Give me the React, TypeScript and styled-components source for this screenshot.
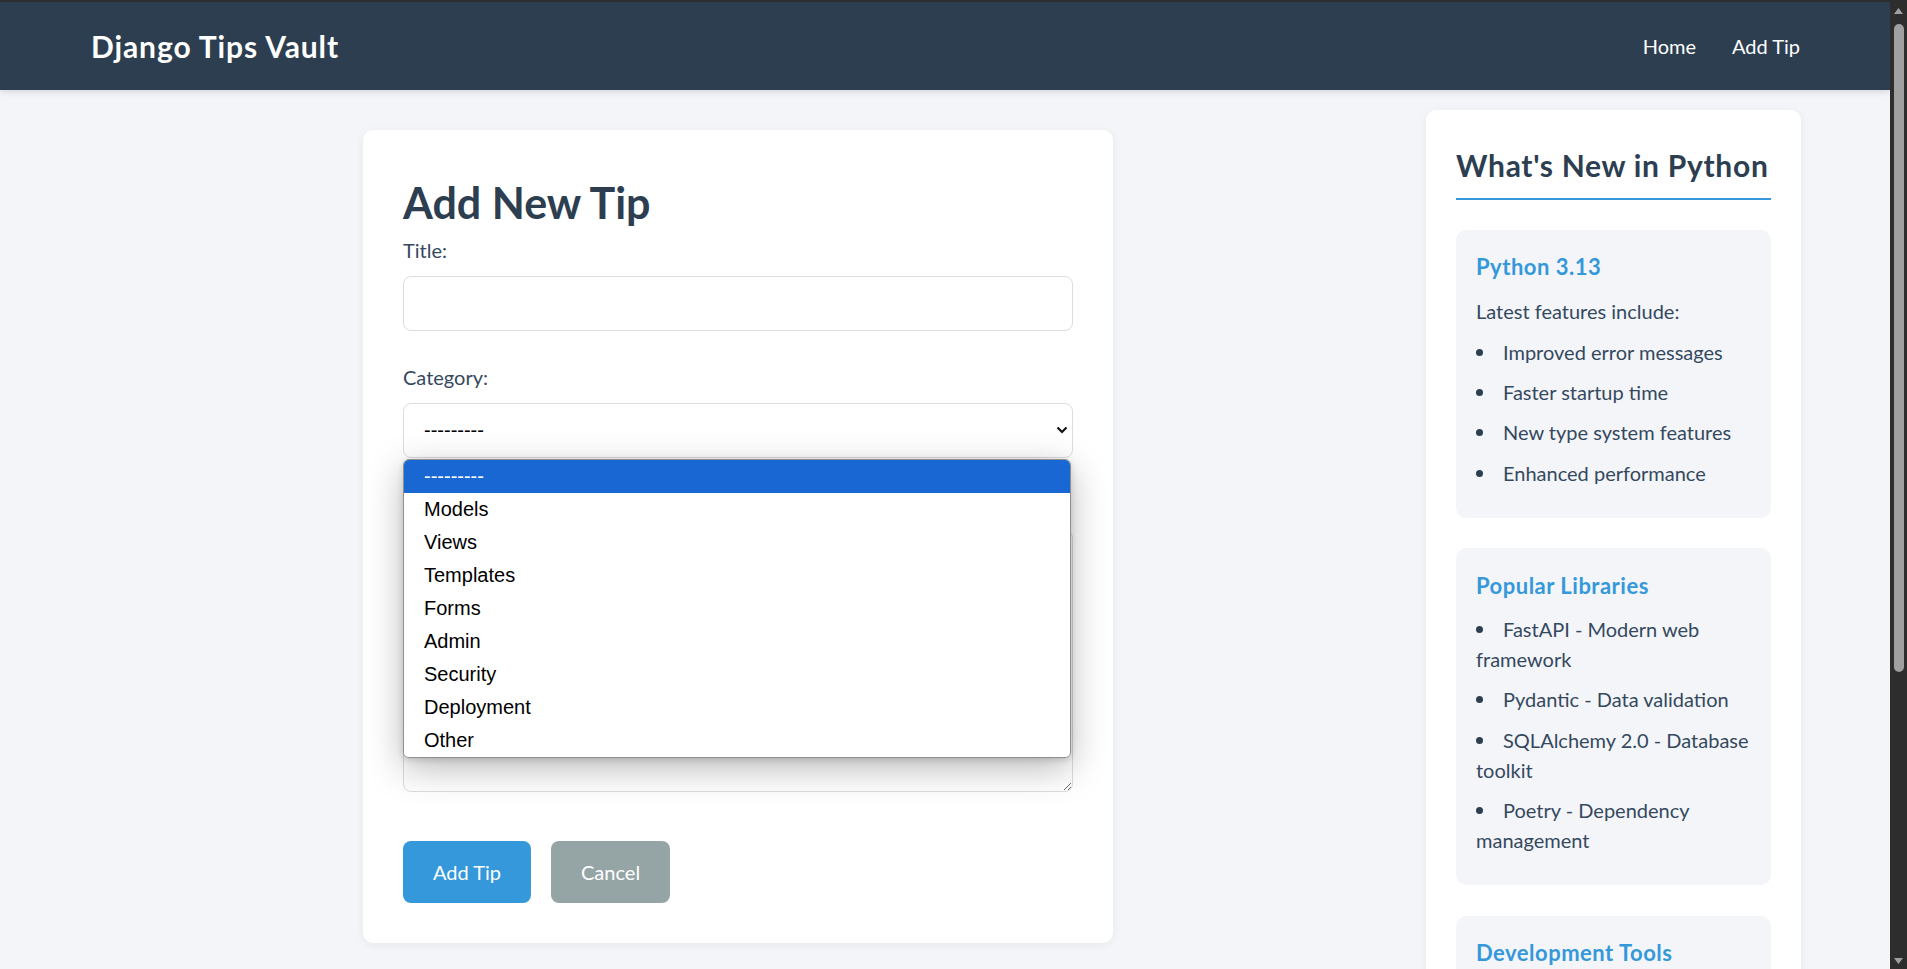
import React from "react";
import styled, { createGlobalStyle } from "styled-components";

const GlobalStyle = createGlobalStyle`
  html, body {
    margin: 0;
    padding: 0;
    height: 100%;
    overflow: hidden;
  }
  body {
    font-family: Lato, "Open Sans", sans-serif;
    background: #f4f5f9;
  }
  *, *::before, *::after {
    box-sizing: border-box;
  }
`;

const Frame = styled.div`
  display: flex;
  height: 100vh;
  border-top: 2px solid #2e2e2e;
  overflow: hidden;
`;

const Viewport = styled.div`
  flex: 1;
  min-width: 0;
  display: flex;
  flex-direction: column;
  overflow: hidden;
  background: #f4f5f9;
`;

const Header = styled.header`
  position: relative;
  z-index: 2;
  flex: none;
  height: 88px;
  display: flex;
  align-items: center;
  justify-content: space-between;
  padding: 0 90px 0 91px;
  background: #2c3e50;
  box-shadow: 0 2px 6px rgba(0, 0, 0, 0.12);
`;

const Brand = styled.a`
  font-size: 30px;
  line-height: 36px;
  font-weight: 700;
  letter-spacing: 0.9px;
  color: #ffffff;
  text-decoration: none;
`;

const Nav = styled.nav`
  display: flex;
  gap: 36px;
`;

const NavLink = styled.a`
  font-size: 20px;
  line-height: 24px;
  color: #ffffff;
  text-decoration: none;
`;

const Layout = styled.main`
  display: grid;
  grid-template-columns: 1fr 375px;
  gap: 40px;
  align-items: start;
  padding: 20px 89px 0 90px;
`;

const FormCard = styled.section`
  width: 100%;
  max-width: 750px;
  margin: 20px auto 0;
  background: #ffffff;
  border-radius: 10px;
  padding: 40px;
  box-shadow: 0 2px 10px rgba(0, 0, 0, 0.06);
`;

const PageTitle = styled.h1`
  margin: 6.6px 0 6.8px;
  font-size: 43px;
  line-height: 51.6px;
  font-weight: 700;
  color: #2c3e50;
`;

const FormGroup = styled.div`
  margin-bottom: 31px;
`;

const Label = styled.label`
  display: block;
  font-size: 20px;
  line-height: 30px;
  margin-bottom: 11px;
  color: #34495e;
`;

const TextInput = styled.input`
  display: block;
  width: 100%;
  height: 55px;
  padding: 0 20px;
  border: 1px solid #dddddd;
  border-radius: 8px;
  font-family: Lato, sans-serif;
  font-size: 20px;
  background: #ffffff;
`;

const SelectWrap = styled.div`
  position: relative;
`;

const Select = styled.select`
  display: block;
  width: 100%;
  height: 55px;
  padding: 0 40px 0 20px;
  border: 1px solid #dddddd;
  border-radius: 8px;
  appearance: none;
  -webkit-appearance: none;
  background: #ffffff;
  font-family: "Liberation Sans", Arial, sans-serif;
  font-size: 20px;
  color: #000000;
`;

const Chevron = styled.svg`
  position: absolute;
  right: 5px;
  top: 50%;
  transform: translateY(-50%);
  pointer-events: none;
`;

const Dropdown = styled.div`
  position: absolute;
  z-index: 5;
  top: calc(100% + 1px);
  left: 0;
  right: 2px;
  background: #ffffff;
  border: 1px solid #8f8f8f;
  border-radius: 6px;
  overflow: hidden;
  box-shadow: 0 10px 36px rgba(0, 0, 0, 0.28), 0 2px 6px rgba(0, 0, 0, 0.15);
`;

const OptionRow = styled.div<{ $selected?: boolean }>`
  height: 33px;
  display: flex;
  align-items: center;
  padding-left: 20px;
  font-family: "Liberation Sans", Arial, sans-serif;
  font-size: 20px;
  color: ${(p) => (p.$selected ? "#ffffff" : "#000000")};
  background: ${(p) => (p.$selected ? "#1967d2" : "#ffffff")};
`;

const TextArea = styled.textarea`
  display: block;
  width: 100%;
  height: 262px;
  padding: 14px 20px;
  border: 1px solid #dddddd;
  border-radius: 8px;
  font-family: Lato, sans-serif;
  font-size: 20px;
  resize: vertical;
  background: #ffffff;
`;

const Actions = styled.div`
  display: flex;
  gap: 20px;
  margin-top: 49px;
`;

const Button = styled.button<{ $bg: string }>`
  height: 62px;
  padding: 0 30px;
  border: none;
  border-radius: 8px;
  background: ${(p) => p.$bg};
  color: #ffffff;
  font-family: Lato, sans-serif;
  font-size: 20px;
  line-height: 24px;
  cursor: pointer;
`;

const Sidebar = styled.aside`
  background: #ffffff;
  border-radius: 10px;
  padding: 30px;
  box-shadow: 0 2px 10px rgba(0, 0, 0, 0.06);
`;

const SideTitle = styled.h2`
  margin: 7px 0 30px;
  padding-bottom: 15px;
  border-bottom: 2px solid #3498db;
  font-size: 30px;
  line-height: 36px;
  font-weight: 700;
  letter-spacing: 0.7px;
  white-space: nowrap;
  color: #2c3e50;
`;

const InfoCard = styled.div`
  background: #f4f5f9;
  border-radius: 10px;
  padding: 20px;
  margin-bottom: 30.5px;
`;

const InfoTitle = styled.h3`
  margin: 4.3px 0 15px;
  font-size: 22px;
  line-height: 26.4px;
  font-weight: 700;
  letter-spacing: 0.5px;
  color: #3498db;
`;

const InfoText = styled.p`
  margin: 0 0 11px;
  font-size: 20px;
  line-height: 30px;
  color: #34495e;
`;

const List = styled.ul`
  margin: 0;
  padding: 0;
  list-style: none;
`;

const Item = styled.li`
  font-size: 20px;
  line-height: 30px;
  margin-bottom: 10.3px;
  color: #34495e;

  &::before {
    content: "";
    display: inline-block;
    width: 7px;
    height: 7px;
    border-radius: 50%;
    background: #2c3e50;
    margin-right: 20px;
    vertical-align: 4px;
  }
`;

const ScrollTrack = styled.div`
  flex: none;
  width: 17px;
  background: #2d2d2d;
  display: flex;
  flex-direction: column;
  align-items: center;
`;

const ScrollArrow = styled.div`
  flex: none;
  height: 17px;
  width: 17px;
  display: flex;
  align-items: center;
  justify-content: center;
`;

const ScrollThumb = styled.div`
  width: 10px;
  height: 648px;
  margin-top: 5px;
  border-radius: 5px;
  background: #a0a0a0;
`;

const ScrollSpacer = styled.div`
  flex: 1;
`;

const categories = [
  "---------",
  "Models",
  "Views",
  "Templates",
  "Forms",
  "Admin",
  "Security",
  "Deployment",
  "Other",
];

const infoSections: { title: string; text?: string; items: string[] }[] = [
  {
    title: "Python 3.13",
    text: "Latest features include:",
    items: [
      "Improved error messages",
      "Faster startup time",
      "New type system features",
      "Enhanced performance",
    ],
  },
  {
    title: "Popular Libraries",
    items: [
      "FastAPI - Modern web framework",
      "Pydantic - Data validation",
      "SQLAlchemy 2.0 - Database toolkit",
      "Poetry - Dependency management",
    ],
  },
  {
    title: "Development Tools",
    items: ["Ruff - Fast Python linter", "uv - Package installer"],
  },
];

export default function App() {
  return (
    <>
      <GlobalStyle />
      <Frame>
        <Viewport>
          <Header>
            <Brand href="#">Django Tips Vault</Brand>
            <Nav>
              <NavLink href="#">Home</NavLink>
              <NavLink href="#">Add Tip</NavLink>
            </Nav>
          </Header>
          <Layout>
            <FormCard>
              <PageTitle>Add New Tip</PageTitle>
              <form onSubmit={(e) => e.preventDefault()}>
                <FormGroup>
                  <Label htmlFor="title">Title:</Label>
                  <TextInput id="title" type="text" />
                </FormGroup>
                <FormGroup>
                  <Label htmlFor="category">Category:</Label>
                  <SelectWrap>
                    <Select id="category" defaultValue="">
                      {categories.map((c, i) => (
                        <option key={c} value={i === 0 ? "" : c}>
                          {c}
                        </option>
                      ))}
                    </Select>
                    <Chevron width="12" height="8" viewBox="0 0 12 8">
                      <path
                        d="M1.5 1.5 L6 6 L10.5 1.5"
                        fill="none"
                        stroke="#111"
                        strokeWidth="2.2"
                      />
                    </Chevron>
                    <Dropdown role="listbox">
                      {categories.map((c, i) => (
                        <OptionRow key={c} $selected={i === 0} role="option">
                          {c}
                        </OptionRow>
                      ))}
                    </Dropdown>
                  </SelectWrap>
                </FormGroup>
                <FormGroup>
                  <Label htmlFor="content">Content:</Label>
                  <TextArea id="content" />
                </FormGroup>
                <Actions>
                  <Button type="submit" $bg="#3498db">
                    Add Tip
                  </Button>
                  <Button type="button" $bg="#95a5a6">
                    Cancel
                  </Button>
                </Actions>
              </form>
            </FormCard>
            <Sidebar>
              <SideTitle>What's New in Python</SideTitle>
              {infoSections.map((s) => (
                <InfoCard key={s.title}>
                  <InfoTitle>{s.title}</InfoTitle>
                  {s.text && <InfoText>{s.text}</InfoText>}
                  <List>
                    {s.items.map((it) => (
                      <Item key={it}>{it}</Item>
                    ))}
                  </List>
                </InfoCard>
              ))}
            </Sidebar>
          </Layout>
        </Viewport>
        <ScrollTrack>
          <ScrollArrow>
            <svg width="9" height="6" viewBox="0 0 9 6">
              <path d="M4.5 0 L9 6 L0 6 Z" fill="#a0a0a0" />
            </svg>
          </ScrollArrow>
          <ScrollThumb />
          <ScrollSpacer />
          <ScrollArrow>
            <svg width="9" height="6" viewBox="0 0 9 6">
              <path d="M0 0 L9 0 L4.5 6 Z" fill="#a0a0a0" />
            </svg>
          </ScrollArrow>
        </ScrollTrack>
      </Frame>
    </>
  );
}
